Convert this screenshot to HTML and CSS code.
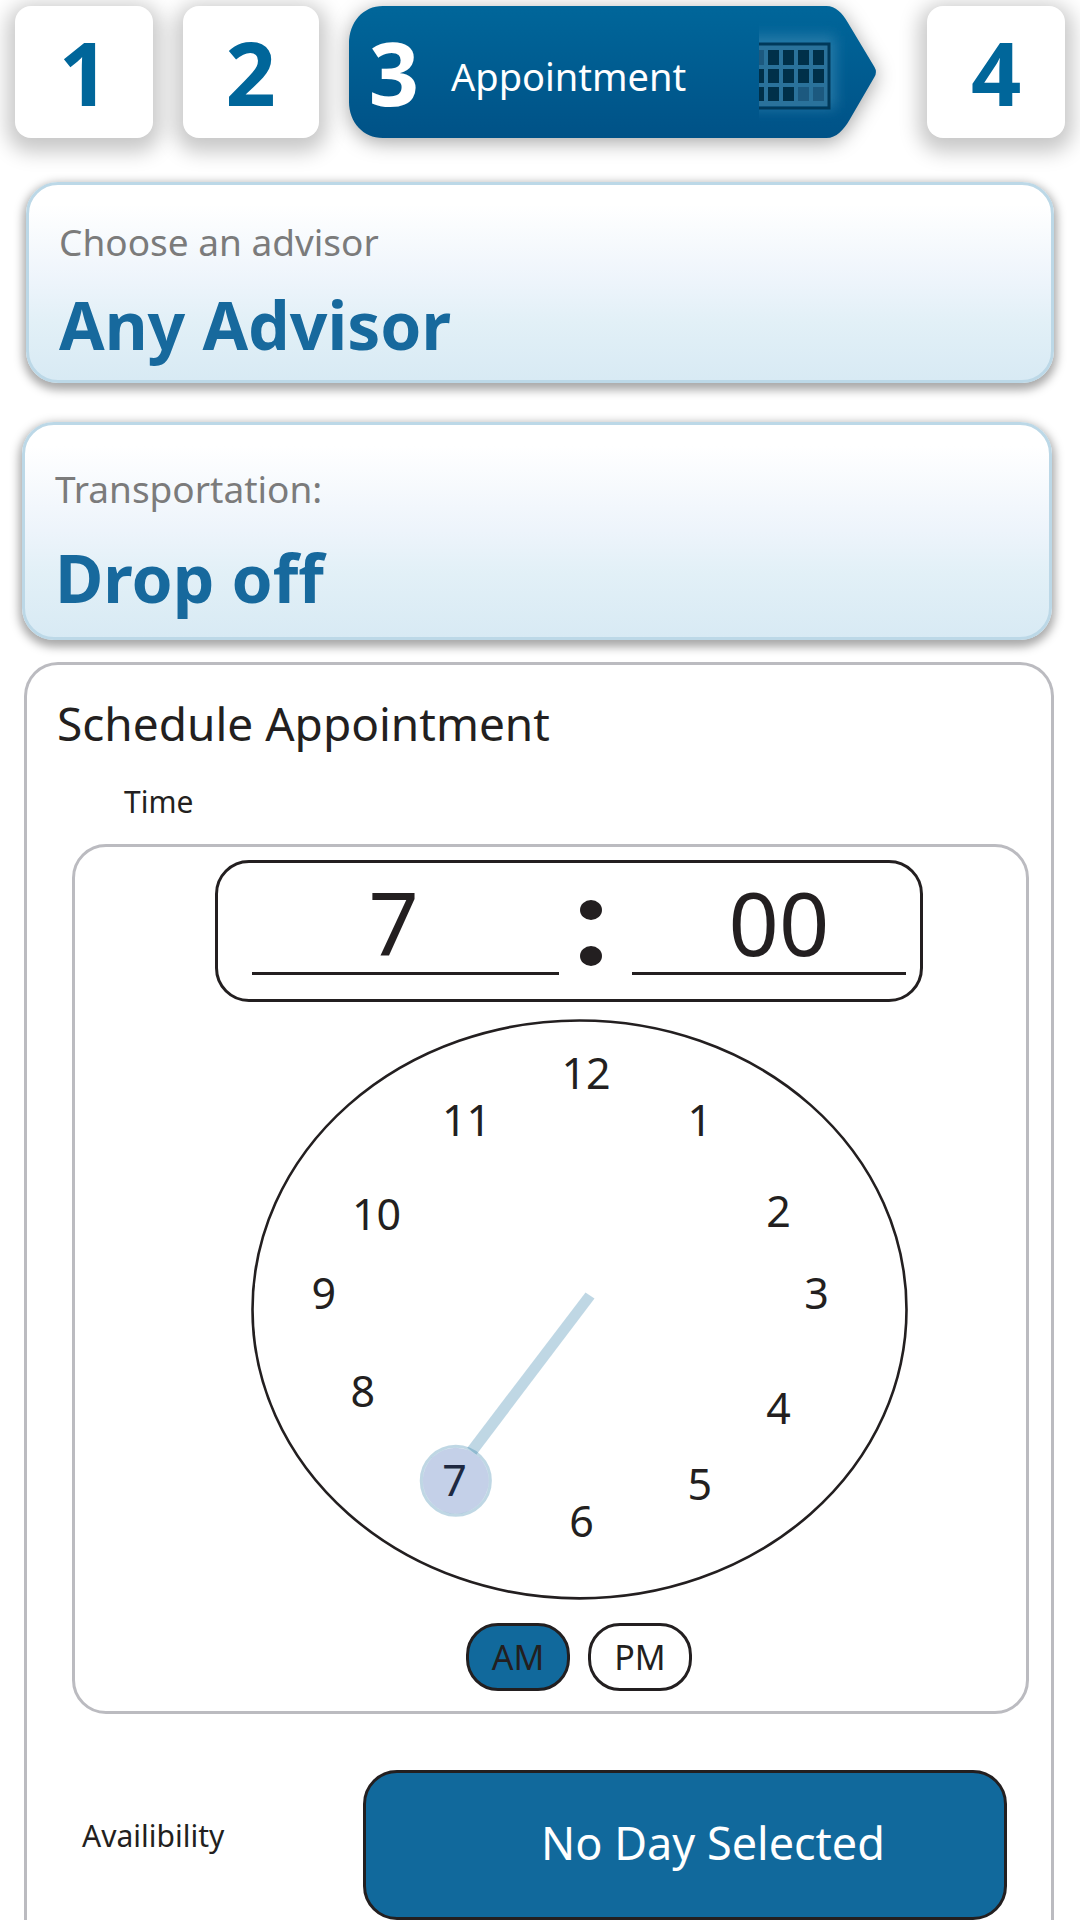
FILE: index.html
```html
<!DOCTYPE html>
<html lang="en">
<head>
<meta charset="utf-8">
<meta name="viewport" content="width=device-width, initial-scale=1">
<title>Schedule Appointment</title>
<link rel="stylesheet" href="styles.css">
</head>
<body>
<nav class="steps" aria-label="Steps">
  <button class="step" type="button">1</button>
  <button class="step" type="button">2</button>
  <button class="step step-current" type="button" aria-current="step">
    <svg class="step-shape" viewBox="0 0 528 132" preserveAspectRatio="none" aria-hidden="true">
      <defs>
        <linearGradient id="tab" x1="0" y1="0" x2="0" y2="1">
          <stop offset="0" stop-color="#00669a"/>
          <stop offset="1" stop-color="#005287"/>
        </linearGradient>
      </defs>
      <path fill="url(#tab)" d="M34 0H478C487 0 494 7 499 16L526 61Q529 66 526 71L501 114C495 124 488 132 478 132H34C14 132 0 116 0 96V38C0 16 14 0 34 0Z"/>
    </svg>
    <span class="step-number">3</span>
    <span class="step-label">Appointment</span>
    <svg class="step-icon" width="92" height="112" viewBox="0 0 92 112" aria-hidden="true">
      <defs>
        <filter id="soft" x="-30%" y="-30%" width="160%" height="160%"><feGaussianBlur stdDeviation="7"/></filter>
      </defs>
      <rect x="-20" y="20" width="96" height="72" fill="#3585b0" opacity=".75" filter="url(#soft)"/>
      <rect x="0" y="28" width="70" height="62" fill="#2a729b"/>
      <path fill="none" stroke="#00395a" stroke-width="3" d="M0 28H70V92H0"/>
      <path fill="#003049" d="M9 34h11v15H9zM24 34h11v15H24zM39 34h11v15H39zM54 34h11v15H54zM0 53h5v14H0zM9 53h11v14H9zM24 53h11v14H24zM39 53h11v14H39zM54 53h11v14H54zM0 71h5v14H0zM9 71h11v14H9zM24 71h11v14H24z"/>
      <path fill="#1c597f" d="M0 34h5v15H0zM39 71h11v14H39zM54 71h11v14H54z"/>
    </svg>
  </button>
  <button class="step" type="button">4</button>
</nav>

<main class="content">
  <button class="choice choice-advisor" type="button">
    <span class="choice-label">Choose an advisor</span>
    <span class="choice-value">Any Advisor</span>
  </button>
  <button class="choice choice-transport" type="button">
    <span class="choice-label">Transportation:</span>
    <span class="choice-value">Drop off</span>
  </button>

  <section class="schedule">
    <h1 class="schedule-title">Schedule Appointment</h1>
    <h2 class="schedule-subtitle">Time</h2>
    <div class="picker">
      <div class="time">
        <input class="time-field time-hour" type="text" value="7" aria-label="Hour">
        <span class="time-colon" aria-hidden="true"><i class="dot"></i><i class="dot"></i></span>
        <input class="time-field time-minute" type="text" value="00" aria-label="Minute">
      </div>
      <div class="clock">
        <button class="hour h12" type="button">12</button>
        <button class="hour h1" type="button">1</button>
        <button class="hour h2" type="button">2</button>
        <button class="hour h3" type="button">3</button>
        <button class="hour h4" type="button">4</button>
        <button class="hour h5" type="button">5</button>
        <button class="hour h6" type="button">6</button>
        <button class="hour h7" type="button" aria-pressed="true">7</button>
        <button class="hour h8" type="button">8</button>
        <button class="hour h9" type="button">9</button>
        <button class="hour h10" type="button">10</button>
        <button class="hour h11" type="button">11</button>
        <svg class="hand" viewBox="0 0 656 580" preserveAspectRatio="none" aria-hidden="true">
          <ellipse cx="328" cy="290" rx="326.5" ry="288.5" fill="none" stroke="#231f20" stroke-width="2.6"/>
          <circle cx="204.500" cy="461" r="33" fill="#1343a3" fill-opacity=".25"/>
          <circle cx="204.500" cy="461" r="34.500" fill="none" stroke="#116a9c" stroke-opacity=".27" stroke-width="3"/>
          <path fill="#116a9c" fill-opacity=".27" d="M334 273L343 279L225 435L216 428Z"/>
        </svg>
      </div>
      <div class="meridiem">
        <button class="half half-active" type="button" aria-pressed="true">AM</button>
        <button class="half" type="button" aria-pressed="false">PM</button>
      </div>
    </div>
    <div class="availability">
      <label class="availability-label" for="day">Availibility</label>
      <button class="day" id="day" type="button">No Day Selected</button>
    </div>
  </section>
</main>
</body>
</html>
```
FILE: styles.css
```css
* {
  box-sizing: border-box;
}

body {
  margin: 0;
  background: #fff;
  color: #231f20;
  font-family: "Noto Sans", "Open Sans", sans-serif;
}

button,
input {
  margin: 0;
  padding: 0;
  border: 0;
  background: none;
  color: inherit;
  font: inherit;
}

button {
  cursor: pointer;
}

.steps {
  display: grid;
  grid-template-columns: 138fr 136fr 549fr 138fr;
  column-gap: 30px;
  padding: 6px 15px 44px;
}

.step {
  height: 132px;
  border-radius: 16px;
  background: #fff;
  box-shadow: 0 6px 20px 8px rgba(0, 0, 0, 0.22);
  color: #00669a;
  font-size: 88px;
  font-weight: 700;
  line-height: 132px;
}

.step-current {
  position: relative;
  display: flex;
  align-items: center;
  margin-right: 21px;
  padding-left: 20px;
  background: none;
  box-shadow: none;
  color: #fff;
}

.step-shape {
  position: absolute;
  inset: 0;
  width: 100%;
  height: 100%;
  overflow: visible;
  filter: drop-shadow(0 4px 10px rgba(0, 0, 0, 0.36));
}

.step-number,
.step-label,
.step-icon {
  position: relative;
}

.step-label {
  flex: 1;
  padding: 8px 0 0 32px;
  font-size: 38px;
  font-weight: 400;
  text-align: left;
}

.step-icon {
  margin-right: 25px;
}

.content {
  display: flex;
  flex-direction: column;
  padding: 0 26px 0 24px;
}

.choice {
  display: flex;
  flex-direction: column;
  align-items: flex-start;
  border: 3px solid #bcd8e7;
  border-radius: 32px;
  background: linear-gradient(#fff 10%, #edf4fb 50%, #e2f0f7 70%, #d8eaf4);
  box-shadow: 0 4px 10px 3px rgba(0, 0, 0, 0.34);
  text-align: left;
}

.choice-advisor {
  height: 201px;
  margin-left: 2px;
  padding: 33px 30px 0;
}

.choice-transport {
  height: 218px;
  margin: 39px 2px 0 -2px;
  padding: 40px 30px 0;
}

.choice-label {
  color: #7b7b7b;
  font-size: 37px;
  line-height: 48px;
}

.choice-value {
  margin-top: 14px;
  color: #17699d;
  font-size: 66px;
  font-weight: 700;
  line-height: 88px;
}

.choice-transport .choice-value {
  margin-top: 20px;
}

.schedule {
  margin: 22px 0 0;
  padding: 30px 22px 0 45px;
  border: 3px solid #bbbbc0;
  border-bottom: 0;
  border-radius: 34px 34px 0 0;
}

.schedule-title {
  margin: 0 0 0 -15px;
  font-size: 46px;
  font-weight: 400;
  line-height: 56px;
}

.schedule-subtitle {
  margin: 29px 0 20px 52px;
  font-size: 30px;
  font-weight: 400;
  line-height: 44px;
}

.picker {
  padding: 13px 103px 20px 140px;
  border: 3px solid #bbbbc0;
  border-radius: 34px;
}

.time {
  display: flex;
  height: 142px;
  padding: 0 14px 24px 34px;
  border: 3px solid #231f20;
  border-radius: 34px;
}

.time-field {
  min-width: 0;
  padding-top: 8px;
  border-bottom: 3px solid #231f20;
  font-size: 88px;
  line-height: 110px;
  text-align: center;
}

.time-hour {
  flex: 309;
  padding-right: 24px;
}

.time-minute {
  flex: 277;
  padding-left: 20px;
}

.time-colon {
  display: flex;
  flex: 68;
  flex-direction: column;
  align-items: center;
  gap: 26px;
  padding: 37px 10px 0 0;
}

.dot {
  width: 22px;
  height: 20px;
  border-radius: 50%;
  background: #231f20;
}

.clock {
  position: relative;
  aspect-ratio: 656 / 580;
  margin: 17px 15px 0 36px;
}

.hand {
  position: absolute;
  inset: 0;
  width: 100%;
  height: 100%;
  pointer-events: none;
}

.hour {
  position: absolute;
  width: 60px;
  height: 60px;
  margin: -30px 0 0 -30px;
  font-size: 43px;
  line-height: 60px;
}

.h12 { left: 51%; top: 9.3%; }
.h1 { left: 68.3%; top: 17.4%; }
.h2 { left: 80.3%; top: 33%; }
.h3 { left: 86.1%; top: 47.2%; }
.h4 { left: 80.3%; top: 66.9%; }
.h5 { left: 68.3%; top: 80%; }
.h6 { left: 50.3%; top: 86.4%; }
.h7 { left: 31%; top: 79.3%; }
.h8 { left: 17%; top: 64%; }
.h9 { left: 11.1%; top: 47.2%; }
.h10 { left: 19.1%; top: 33.6%; }
.h11 { left: 32.8%; top: 17.4%; }

.meridiem {
  display: flex;
  justify-content: center;
  gap: 18px;
  margin: 23px 0 0 20px;
}

.half {
  width: 104px;
  height: 68px;
  border: 3px solid #231f20;
  border-radius: 32px;
  font-size: 34px;
  line-height: 60px;
}

.half-active,
.day {
  background: #11699c;
}

.availability {
  display: flex;
  align-items: center;
  justify-content: space-between;
  margin: 56px 22px 0 -10px;
}

.availability-label {
  padding: 0 0 18px 20px;
  font-size: 30px;
  line-height: 44px;
}

.day {
  flex: 0 1 644px;
  height: 150px;
  padding: 0 0 4px 56px;
  border: 3px solid #231f20;
  border-radius: 34px;
  color: #fff;
  font-size: 45px;
}
```
